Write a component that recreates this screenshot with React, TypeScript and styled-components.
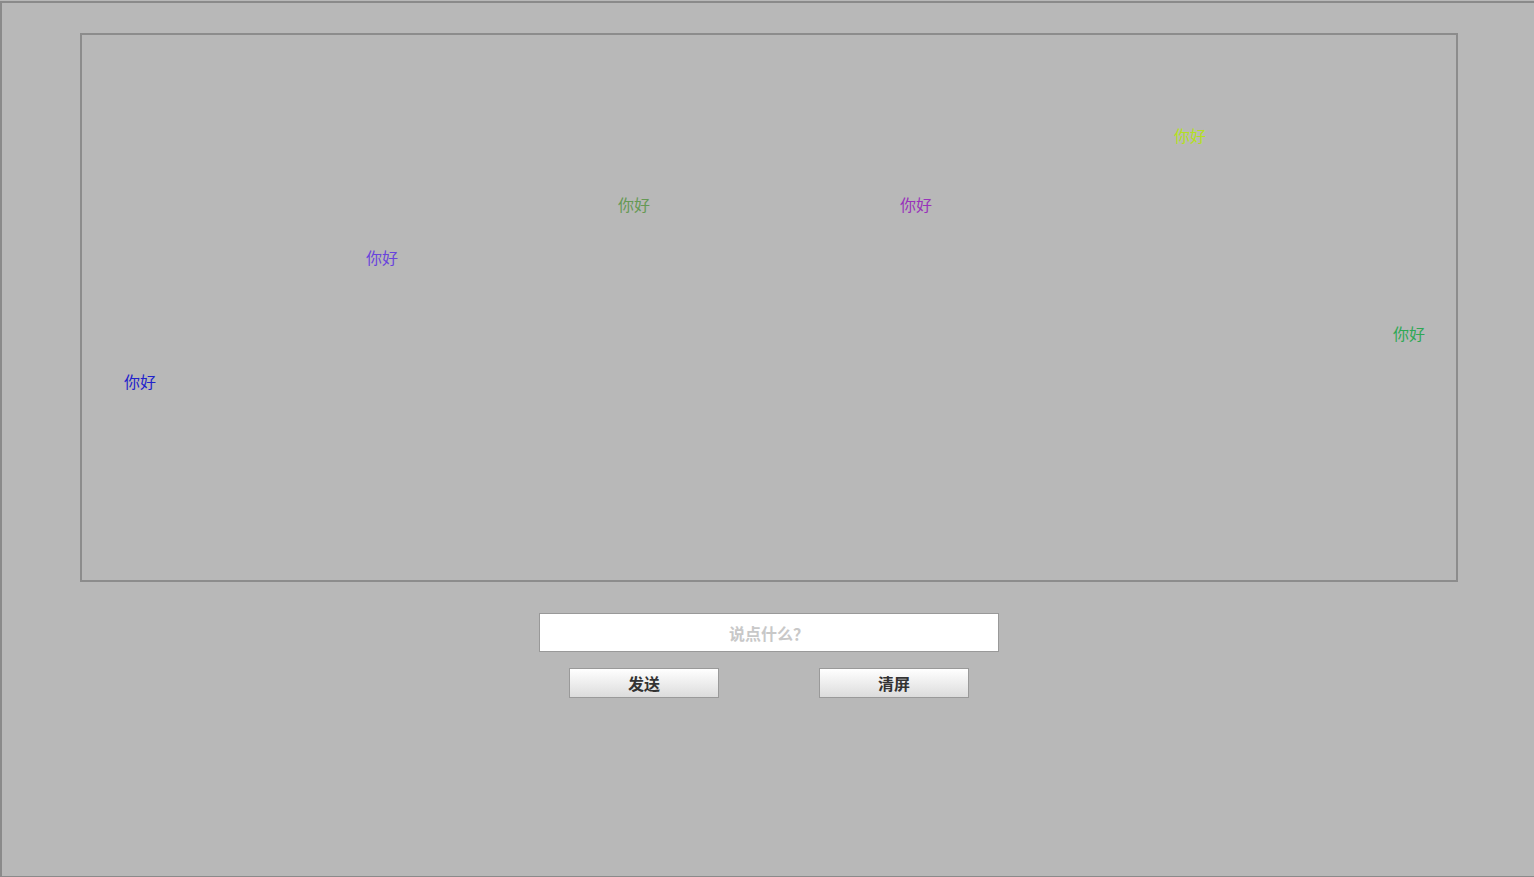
import React from "react";
import styled, { createGlobalStyle } from "styled-components";

const Global = createGlobalStyle`
  html, body { margin: 0; padding: 0; background: #b8b8b8; overflow: hidden; }
  body { font-family: "Microsoft YaHei", "Noto Sans CJK SC", "Noto Sans", sans-serif; }
  * { box-sizing: border-box; }
`;

const Page = styled.div`
  width: 1538px;
  height: 877px;
  margin-top: 1px;
  border: 2px solid #8a8a8a;
  background: #b8b8b8;
  display: flex;
  flex-direction: column;
  align-items: center;
  padding-top: 30px;
`;

const Screen = styled.div`
  position: relative;
  width: 1378px;
  height: 549px;
  border: 2px solid #8c8c8c;
  background: #b8b8b8;
  overflow: hidden;
`;

const Bullet = styled.span<{ $color: string }>`
  position: absolute;
  font-size: 16px;
  line-height: 22px;
  color: ${(p) => p.$color};
  white-space: nowrap;
`;

const InputBox = styled.input`
  margin-top: 31px;
  width: 460px;
  height: 39px;
  border: 1px solid #999;
  background: #fff;
  font-family: inherit;
  font-size: 16px;
  font-weight: bold;
  text-align: center;
  color: #333;
  outline: none;
  caret-color: #000;
  &::placeholder { color: #c8c8c8; }
`;

const Buttons = styled.div`
  margin-top: 16px;
  display: flex;
  gap: 100px;
`;

const Btn = styled.button`
  width: 150px;
  height: 30px;
  border: 1px solid #9a9a9a;
  border-radius: 0;
  background: linear-gradient(#ffffff, #dcdcdc);
  font-family: inherit;
  font-size: 16px;
  font-weight: bold;
  color: #333;
  padding: 0;
  cursor: pointer;
`;

const bullets = [
  { text: "你好", left: 1092, top: 89, color: "#b4e020" },
  { text: "你好", left: 536, top: 158, color: "#669955" },
  { text: "你好", left: 818, top: 158, color: "#9933bb" },
  { text: "你好", left: 284, top: 211, color: "#6a44dd" },
  { text: "你好", left: 1311, top: 287, color: "#2fa855" },
  { text: "你好", left: 42, top: 335, color: "#2222cc" },
];

export default function App() {
  return (
    <>
      <Global />
      <Page>
        <Screen>
          {bullets.map((b, i) => (
            <Bullet key={i} $color={b.color} style={{ left: b.left, top: b.top }}>
              {b.text}
            </Bullet>
          ))}
        </Screen>
        <InputBox placeholder="说点什么？" autoFocus />
        <Buttons>
          <Btn>发送</Btn>
          <Btn>清屏</Btn>
        </Buttons>
      </Page>
    </>
  );
}
